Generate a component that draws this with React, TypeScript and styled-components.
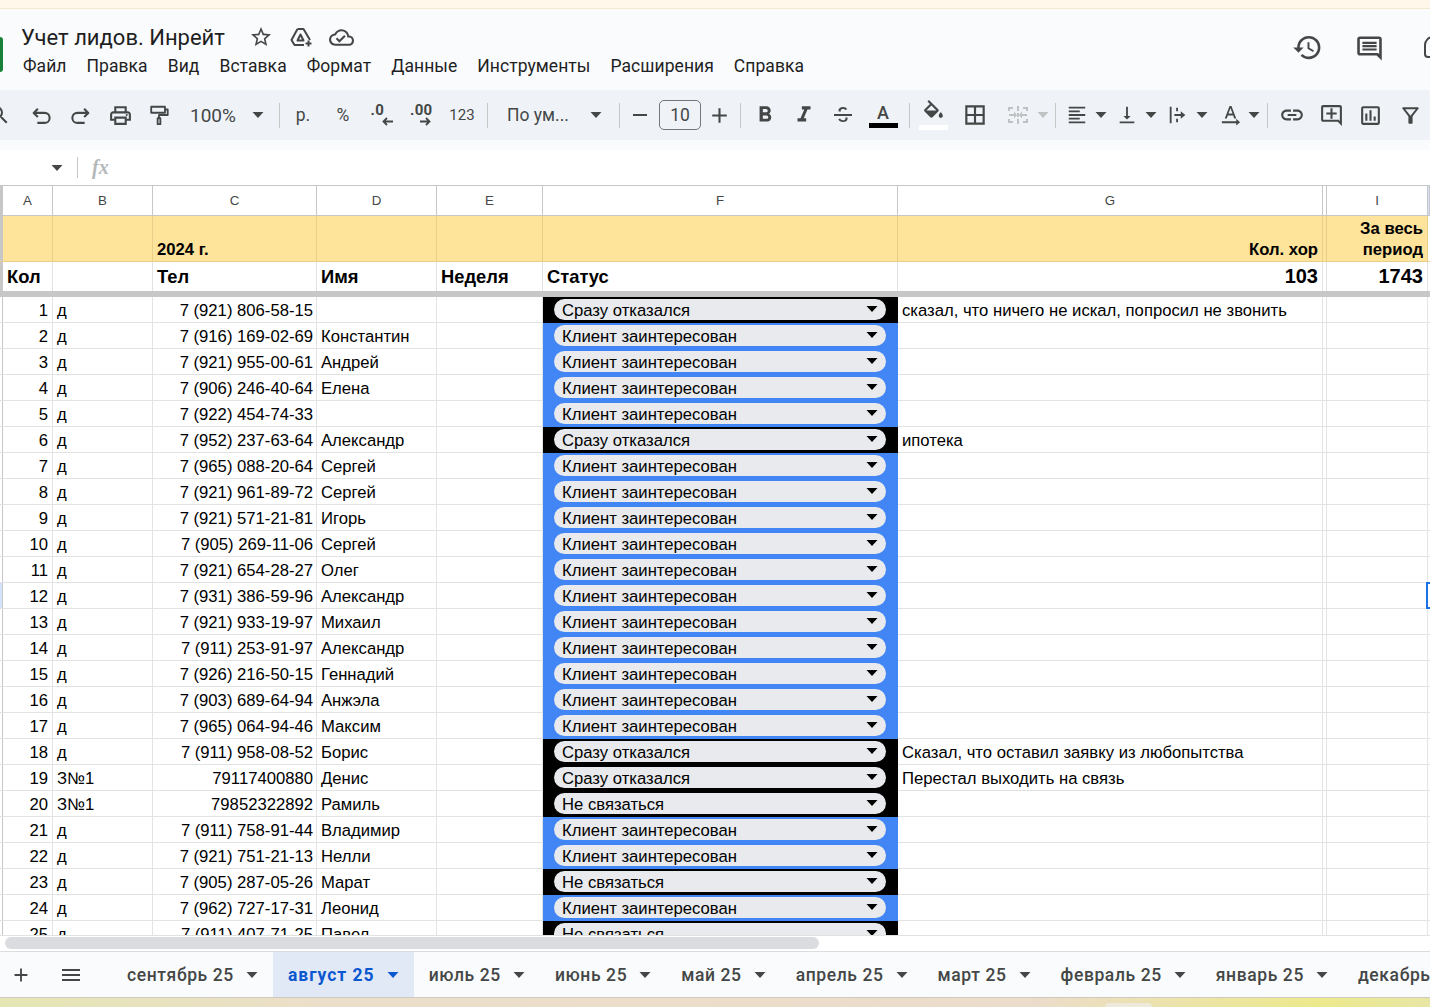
import React from "react";
import styled, { createGlobalStyle } from "styled-components";
import {
  MdHistory,
  MdStarBorder,
  MdOutlineCloudDone,
  MdOutlinePrint,
  MdFormatBold,
  MdFormatItalic,
  MdOutlineBorderAll,
  MdFormatAlignLeft,
  MdVerticalAlignBottom,
  MdLink,
  MdOutlineAddComment,
  MdOutlineInsertChart,
  MdOutlineFilterAlt,
  MdSearch,
  MdAdd,
  MdRemove,
  MdMenu,
} from "react-icons/md";

const COLUMNS = "3px 50px 100px 164px 120px 106px 355px 425px 4px 101px 2px";

const GlobalStyle = createGlobalStyle`
  html, body {
    margin: 0;
    padding: 0;
    width: 1430px;
    height: 1007px;
    overflow: hidden;
    background: #fff;
  }
  * { box-sizing: border-box; }
`;

const Page = styled.div`
  position: relative;
  width: 1430px;
  height: 1007px;
  overflow: hidden;
  display: flex;
  flex-direction: column;
  font-family: Roboto, "Liberation Sans", sans-serif;
`;

const Banner = styled.div`
  height: 9px;
  flex: none;
  background: #fff7e9;
  border-bottom: 1px solid #f3e8cf;
`;

const Header = styled.header`
  height: 81px;
  flex: none;
  background: #f9fbfd;
  display: flex;
  align-items: flex-start;
`;

const Logo = styled.div`
  width: 3px;
  height: 35px;
  margin-top: 28px;
  background: #188038;
  border-radius: 0 3px 3px 0;
  flex: none;
`;

const TitleBlock = styled.div`
  margin-left: 18px;
  width: 1270.5px;
  flex: none;
`;

const TitleRow = styled.div`
  height: 30px;
  margin-top: 13px;
  display: flex;
  align-items: center;
  color: #444746;
`;

const DocTitle = styled.div`
  font-size: 22px;
  color: #1f1f1f;
  width: 226px;
  white-space: nowrap;
`;

const TitleIcon = styled.span<{ $ml?: number }>`
  width: 40px;
  margin-left: ${(p) => p.$ml ?? 0}px;
  display: flex;
  justify-content: center;
  flex: none;
`;

const Menu = styled.nav`
  display: flex;
  margin-top: 2px;
  margin-left: 2px;
  gap: 20px;
  font-size: 17.5px;
  letter-spacing: 0.06px;
  line-height: 24px;
  color: #1f1f1f;
`;

const HeaderActions = styled.div`
  display: flex;
  align-items: center;
  flex: none;
  height: 34px;
  margin-top: 21px;
  gap: 31px;
  color: #444746;
`;

const MeetShape = styled.span`
  display: block;
  flex: none;
  width: 26px;
  height: 22px;
  margin-left: 8px;
  border: 2.5px solid #444746;
  border-radius: 4px;
  border-top-left-radius: 9px;
`;

const ToolbarBand = styled.div`
  height: 60px;
  flex: none;
  background: #f9fbfd;
`;

const Toolbar = styled.div`
  height: 50px;
  background: #eff3f8;
  display: flex;
  align-items: center;
  color: #444746;
  font-size: 17.5px;
  overflow: hidden;
`;

const Slot = styled.span<{ $w: number; $ml?: number }>`
  width: ${(p) => p.$w}px;
  margin-left: ${(p) => p.$ml ?? 0}px;
  flex: none;
  display: flex;
  align-items: center;
  justify-content: center;
  white-space: nowrap;
`;

const Sep = styled.span<{ $l?: number; $r?: number }>`
  width: 1px;
  height: 25px;
  flex: none;
  background: #c7c7c7;
  margin-left: ${(p) => p.$l ?? 0}px;
  margin-right: ${(p) => p.$r ?? 0}px;
`;

const Split = styled.span<{ $w: number; $ml?: number; $gap?: number }>`
  width: ${(p) => p.$w}px;
  margin-left: ${(p) => p.$ml ?? 0}px;
  flex: none;
  display: flex;
  align-items: center;
  gap: ${(p) => p.$gap ?? 7}px;
`;

const Picker = styled.span<{ $w: number; $pad: number; $gap: number; $size?: number }>`
  width: ${(p) => p.$w}px;
  padding-left: ${(p) => p.$pad}px;
  font-size: ${(p) => p.$size ?? 17.5}px;
  flex: none;
  display: flex;
  align-items: center;
  gap: ${(p) => p.$gap}px;
  white-space: nowrap;
`;

const SmallLabel = styled.span`
  font-size: 15px;
`;

const DecimalLabel = styled.span<{ $arrowLeft: number }>`
  width: 24px;
  font-size: 15px;
  font-weight: 700;
  letter-spacing: 0.3px;
  line-height: 13px;
  display: flex;
  flex-direction: column;
  align-items: flex-start;

  svg {
    margin-left: ${(p) => p.$arrowLeft}px;
  }
`;

const SizeBox = styled.span`
  width: 42px;
  height: 30px;
  flex: none;
  border: 1px solid #747775;
  border-radius: 5px;
  display: flex;
  align-items: center;
  justify-content: center;
  font-size: 17.5px;
`;

const ColorTool = styled.span`
  display: flex;
  flex-direction: column;
  align-items: center;
  line-height: 20px;
  font-size: 18px;
  font-family: Roboto, sans-serif;
  font-weight: 500;
`;

const ColorBar = styled.span<{ $color: string }>`
  display: block;
  width: 29px;
  height: 5px;
  background: ${(p) => p.$color};
`;

const DisabledTool = styled.span`
  color: #bfc1c2;
  display: flex;
`;

const FormulaBar = styled.div`
  height: 36px;
  flex: none;
  background: #fff;
  display: flex;
  align-items: center;
  border-bottom: 1px solid #c4c7c5;
  padding-left: 51px;
`;

const FormulaDivider = styled.span`
  width: 1px;
  height: 21px;
  background: #c7c7c7;
  margin-left: 14px;
`;

const FxLabel = styled.span`
  margin-left: 14px;
  font-family: "Liberation Serif", serif;
  font-style: italic;
  font-weight: 700;
  font-size: 20px;
  color: #b5b7b8;
`;

const Sheet = styled.div`
  height: 750px;
  flex: none;
  overflow: hidden;
  background: #fff;
  border-bottom: 1px solid #e1e3e1;
`;

const GridRow = styled.div<{ $h: number; $line?: string }>`
  display: grid;
  grid-template-columns: ${COLUMNS};
  height: ${(p) => p.$h}px;
  border-bottom: 1px solid ${(p) => p.$line ?? "#e2e3e3"};
`;

const Gutter = styled.div<{ $bg?: string }>`
  background: ${(p) => p.$bg ?? "#fff"};
  border-right: 1px solid #c7c7c7;
`;

const HiddenColumn = styled.div<{ $bg?: string; $line?: string }>`
  background: ${(p) => p.$bg ?? "#fff"};
  border-right: 1px solid ${(p) => p.$line ?? "#e2e3e3"};
`;

const RowEnd = styled.div`
  background: #fff;
`;

const ColHead = styled.div<{ $picked?: boolean }>`
  background: ${(p) => (p.$picked ? "#d3e3fd" : "#fff")};
  border-right: 1px solid #c7c7c7;
  display: flex;
  align-items: center;
  justify-content: center;
  font-family: "Liberation Sans", sans-serif;
  font-size: 13.3px;
  color: #444746;
`;

const Cell = styled.div<{
  $align?: "left" | "right";
  $bold?: boolean;
  $size?: number;
  $bg?: string;
  $line?: string;
  $pr?: number;
  $pb?: number;
  $wrap?: boolean;
}>`
  background: ${(p) => p.$bg ?? "#fff"};
  border-right: 1px solid ${(p) => p.$line ?? "#e2e3e3"};
  padding: 0 ${(p) => p.$pr ?? 4}px ${(p) => p.$pb ?? 1}px 4px;
  font-family: "Liberation Sans", sans-serif;
  font-size: ${(p) => p.$size ?? 16.67}px;
  font-weight: ${(p) => (p.$bold ? 700 : 400)};
  color: #000;
  text-align: ${(p) => p.$align ?? "left"};
  white-space: ${(p) => (p.$wrap ? "normal" : "nowrap")};
  overflow: hidden;
  display: flex;
  flex-direction: column;
  justify-content: flex-end;
  line-height: 21px;
`;

const FreezeLine = styled.div`
  height: 5px;
  background: #c7c7c7;
`;

const StatusCell = styled.div<{ $bg: string }>`
  background: ${(p) => p.$bg};
  padding: 2px 12px 0 11px;
  margin-bottom: -1px;
  position: relative;
`;

const StatusPill = styled.div`
  height: 21px;
  border-radius: 11px;
  background: #e8eaed;
  display: flex;
  align-items: center;
  justify-content: space-between;
  padding: 2px 8px 0;
  font-family: "Liberation Sans", sans-serif;
  font-size: 16.67px;
  color: #000;

  svg {
    margin-top: -3px;
  }
`;

const ScrollArea = styled.div`
  height: 16px;
  flex: none;
  background: #fff;
  padding: 1px 0 0 5px;
  border-bottom: 1px solid #dadce0;
`;

const ScrollThumb = styled.div`
  width: 814px;
  height: 12px;
  background: #dadce0;
  border-radius: 6px;
`;

const TabBar = styled.div`
  height: 46px;
  flex: none;
  background: #f9fbfd;
  display: flex;
  align-items: stretch;
  color: #444746;
  overflow: hidden;
  border-bottom: 1px solid #cfcabf;
`;

const TabTool = styled.span<{ $w: number }>`
  width: ${(p) => p.$w}px;
  flex: none;
  display: flex;
  align-items: center;
  justify-content: center;
`;

const Tab = styled.div<{ $active?: boolean }>`
  flex: none;
  display: flex;
  align-items: center;
  gap: 12px;
  padding: 0 15px;
  font-size: 17.5px;
  letter-spacing: ${(p) => (p.$active ? 1 : 0.6)}px;
  white-space: nowrap;
  background: ${(p) => (p.$active ? "#e1e9f7" : "transparent")};
  color: ${(p) => (p.$active ? "#0b57d0" : "#444746")};
  font-weight: ${(p) => (p.$active ? 700 : 500)};
`;

const Desktop = styled.div`
  flex: 1;
  background: linear-gradient(90deg, #e4e6b4 0%, #ecdfc9 22%, #ebdccb 72%, #ece98c 92%, #e8e6a4 100%);
`;

const SelectedCell = styled.div`
  position: absolute;
  left: 1426px;
  top: 582px;
  width: 10px;
  height: 27px;
  border: 2px solid #1a73e8;
`;

const DockTab = styled.div`
  position: absolute;
  left: 1105px;
  top: 1003px;
  width: 47px;
  height: 4px;
  background: #eeeadb;
  border-radius: 5px 5px 0 0;
`;

const Caret = ({ color = "#444746" }: { color?: string }) => (
  <svg width="12" height="6" viewBox="0 0 12 6" style={{ flex: "none" }}>
    <path d="M0.5 0h11L6 6z" fill={color} />
  </svg>
);

const Icon = ({ children, size = 24 }: { children: React.ReactNode; size?: number }) => (
  <svg width={size} height={size} viewBox="0 0 24 24" fill="currentColor" style={{ flex: "none" }}>
    {children}
  </svg>
);

const Line = ({ children, size = 24 }: { children: React.ReactNode; size?: number }) => (
  <svg
    width={size}
    height={size}
    viewBox="0 0 24 24"
    fill="none"
    stroke="currentColor"
    strokeWidth="2"
    strokeLinejoin="round"
    style={{ flex: "none" }}
  >
    {children}
  </svg>
);

const STATUS = {
  ok: { label: "Клиент заинтересован", bg: "#4285f4" },
  no: { label: "Сразу отказался", bg: "#000" },
  nc: { label: "Не связаться", bg: "#000" },
};

type Lead = [string, string, string, keyof typeof STATUS, string?];

const LEADS: Lead[] = [
  ["д", "7 (921) 806-58-15", "", "no", "сказал, что ничего не искал, попросил не звонить"],
  ["д", "7 (916) 169-02-69", "Константин", "ok"],
  ["д", "7 (921) 955-00-61", "Андрей", "ok"],
  ["д", "7 (906) 246-40-64", "Елена", "ok"],
  ["д", "7 (922) 454-74-33", "", "ok"],
  ["д", "7 (952) 237-63-64", "Александр", "no", "ипотека"],
  ["д", "7 (965) 088-20-64", "Сергей", "ok"],
  ["д", "7 (921) 961-89-72", "Сергей", "ok"],
  ["д", "7 (921) 571-21-81", "Игорь", "ok"],
  ["д", "7 (905) 269-11-06", "Сергей", "ok"],
  ["д", "7 (921) 654-28-27", "Олег", "ok"],
  ["д", "7 (931) 386-59-96", "Александр", "ok"],
  ["д", "7 (921) 933-19-97", "Михаил", "ok"],
  ["д", "7 (911) 253-91-97", "Александр", "ok"],
  ["д", "7 (926) 216-50-15", "Геннадий", "ok"],
  ["д", "7 (903) 689-64-94", "Анжэла", "ok"],
  ["д", "7 (965) 064-94-46", "Максим", "ok"],
  ["д", "7 (911) 958-08-52", "Борис", "no", "Сказал, что оставил заявку из любопытства"],
  ["З№1", "79117400880", "Денис", "no", "Перестал выходить на связь"],
  ["З№1", "79852322892", "Рамиль", "nc"],
  ["д", "7 (911) 758-91-44", "Владимир", "ok"],
  ["д", "7 (921) 751-21-13", "Нелли", "ok"],
  ["д", "7 (905) 287-05-26", "Марат", "nc"],
  ["д", "7 (962) 727-17-31", "Леонид", "ok"],
  ["д", "7 (911) 407-71-25", "Павел", "nc"],
];

const TABS = ["сентябрь 25", "август 25", "июль 25", "июнь 25", "май 25", "апрель 25", "март 25", "февраль 25", "январь 25", "декабрь 24"];
const MENU = ["Файл", "Правка", "Вид", "Вставка", "Формат", "Данные", "Инструменты", "Расширения", "Справка"];
const YELLOW = "#fee39a";
const YELLOW_LINE = "#e8d08c";

export default function App() {
  return (
    <Page>
      <GlobalStyle />
      <Banner />
      <Header>
        <Logo />
        <TitleBlock>
          <TitleRow>
            <DocTitle>Учет лидов. Инрейт</DocTitle>
            <TitleIcon $ml={-6}>
              <MdStarBorder size={24} />
            </TitleIcon>
            <TitleIcon>
              <Line>
                <path d="M8.500 4h6l6.500 11" />
                <path d="M8.500 4 2.500 15l3 5h9.500" />
                <path d="M11.500 9.500 8.500 15.500h6z" />
                <path d="M19.500 15.500v6M16.500 18.500h6" />
              </Line>
            </TitleIcon>
            <TitleIcon>
              <MdOutlineCloudDone size={25} />
            </TitleIcon>
          </TitleRow>
          <Menu>
            {MENU.map((m) => (
              <span key={m}>{m}</span>
            ))}
          </Menu>
        </TitleBlock>
        <HeaderActions>
          <MdHistory size={31} />
          <Icon size={31}>
            <path d="M4.500 3.500h15c1.100 0 2 .9 2 2v16.500l-4-3.800H4.500c-1.100 0-2-.9-2-2V5.500c0-1.100.9-2 2-2zm0 2v10.700h14l1 .9V5.500zM6.500 7.500h11v1.700h-11zM6.500 10.100h11v1.700h-11zM6.500 12.700h11v1.700h-11z" />
          </Icon>
          <MeetShape />
        </HeaderActions>
      </Header>

      <ToolbarBand>
        <Toolbar>
          <Slot $w={45} $ml={-24}>
            <MdSearch size={24} />
          </Slot>
          <Slot $w={40}>
            <Line size={25}>
              <path d="M8.500 5.500 4.500 9.500l4 4M4.500 9.500h10.500a4.800 4.800 0 0 1 0 9.600H8" />
            </Line>
          </Slot>
          <Slot $w={39}>
            <Line size={25}>
              <path d="M15.500 5.500l4 4-4 4M19.500 9.500H9a4.800 4.800 0 0 0 0 9.600h7" />
            </Line>
          </Slot>
          <Slot $w={40}><MdOutlinePrint size={25} /></Slot>
          <Slot $w={38}>
            <Line size={22}>
              <path d="M3.500 3h15v6.500h-15zM18.500 6h3v6H12v3.500" />
              <path d="M10.500 15.500h3v6.500h-3z" />
            </Line>
          </Slot>
          <Picker $w={92} $pad={12} $gap={16} $size={19}>
            100% <Caret />
          </Picker>
          <Sep $l={9} $r={3} />
          <Slot $w={40}>р.</Slot>
          <Slot $w={40}>%</Slot>
          <Slot $w={39}>
            <DecimalLabel $arrowLeft={11}>
              .0
              <svg width="11" height="9" viewBox="0 0 11 9">
                <path d="M11 4.500H1.500M5 1 1.500 4.500 5 8" stroke="#444746" strokeWidth="1.800" fill="none" />
              </svg>
            </DecimalLabel>
          </Slot>
          <Slot $w={40}>
            <DecimalLabel $arrowLeft={10}>
              .00
              <svg width="11" height="9" viewBox="0 0 11 9">
                <path d="M0 4.500h9.500M6 1l3.500 3.500L6 8" stroke="#444746" strokeWidth="1.800" fill="none" />
              </svg>
            </DecimalLabel>
          </Slot>
          <Slot $w={40}><SmallLabel>123</SmallLabel></Slot>
          <Sep $l={5} $r={3} />
          <Picker $w={119} $pad={16} $gap={21}>
            По ум... <Caret />
          </Picker>
          <Sep $l={9} />
          <Slot $w={39}><MdRemove size={24} /></Slot>
          <SizeBox>10</SizeBox>
          <Slot $w={36}><MdAdd size={25} /></Slot>
          <Sep $l={3} $r={4} />
          <Slot $w={39}><MdFormatBold size={26} /></Slot>
          <Slot $w={39}><MdFormatItalic size={26} /></Slot>
          <Slot $w={40}>
            <Icon>
              <path d="M3 11h18v2H3zM12 4c2 0 3.500.8 4.200 2.300l-1.800.8C14 6.300 13.200 5.900 12 5.900c-1.300 0-2.300.6-2.300 1.500 0 .4.100.7.400 1H7.800c-.2-.4-.3-.8-.3-1.200C7.500 5.300 9.400 4 12 4zM14.200 14.500h2.300c.1.300.1.600.1.900 0 2.200-1.900 3.600-4.600 3.600-2.200 0-3.900-1-4.700-2.700l1.800-.8c.4 1.100 1.500 1.700 2.900 1.700 1.500 0 2.500-.7 2.500-1.800 0-.3-.1-.6-.3-.9z" />
            </Icon>
          </Slot>
          <Slot $w={40}>
            <ColorTool>
              A
              <ColorBar $color="#000" />
            </ColorTool>
          </Slot>
          <Sep $l={6} $r={4} />
          <Slot $w={39}>
            <ColorTool>
              <Icon size={25}>
                <path d="M16.560 8.940 7.620 0 6.210 1.410l2.380 2.380-5.150 5.150c-.59.59-.59 1.540 0 2.120l5.500 5.500c.29.29.68.44 1.060.44s.77-.15 1.060-.44l5.500-5.500c.59-.58.59-1.530 0-2.120zM5.210 10 10 5.210 14.790 10H5.210zM19 11.500s-2 2.170-2 3.500c0 1.100.9 2 2 2s2-.9 2-2c0-1.330-2-3.500-2-3.500z" />
              </Icon>
              <ColorBar $color="#fff" />
            </ColorTool>
          </Slot>
          <Slot $w={44}><MdOutlineBorderAll size={26} /></Slot>
          <Split $w={42} $ml={9} $gap={7}>
            <DisabledTool>
              <Icon>
                <path d="M2 4h2v4H2zM2 16h2v4H2zM2 4h5v2H2zM2 18h5v2H2zM20 4h2v4h-2zM20 16h2v4h-2zM17 4h5v2h-5zM17 18h5v2h-5zM11 3h2v5h-2zM11 10h2v4h-2zM11 16h2v5h-2zM3 11h5V8.500l3 3.500-3 3.500V13H3zM21 11h-5V8.500L13 12l3 3.500V13h5z" />
              </Icon>
            </DisabledTool>
            <Caret color="#bfc1c2" />
          </Split>
          <Sep $l={7} $r={10} />
          <Split $w={50}>
            <MdFormatAlignLeft size={22} />
            <Caret />
          </Split>
          <Split $w={51}>
            <MdVerticalAlignBottom size={22} />
            <Caret />
          </Split>
          <Split $w={52}>
            <Icon size={22}>
              <path d="M3 3h2v18H3zM8 11h7V8l5 4-5 4v-3H8zM10 4h2v4h-2zM10 16h2v4h-2z" />
            </Icon>
            <Caret />
          </Split>
          <Split $w={39} $gap={6}>
            <Icon size={23}>
              <path d="M11 2h2l5 13h-2.200l-1-3H9.200l-1 3H6zM9.900 10h4.200L12 4.500zM3 18h15v-2.500l4 3.500-4 3.500V20H3z" />
            </Icon>
            <Caret />
          </Split>
          <Sep $l={9} />
          <Slot $w={47}><MdLink size={26} /></Slot>
          <Slot $w={32}><MdOutlineAddComment size={25} /></Slot>
          <Slot $w={47}><MdOutlineInsertChart size={25} /></Slot>
          <Slot $w={32}><MdOutlineFilterAlt size={25} /></Slot>
        </Toolbar>
      </ToolbarBand>

      <FormulaBar>
        <Caret />
        <FormulaDivider />
        <FxLabel>fx</FxLabel>
      </FormulaBar>

      <Sheet>
        <GridRow $h={30} $line="#c7c7c7">
          <Gutter $bg="#c7c7c7" />
          {["A", "B", "C", "D", "E", "F", "G", "", "I", ""].map((c, i) => (
            <ColHead key={i} $picked={i === 9}>{c}</ColHead>
          ))}
        </GridRow>
        <GridRow $h={46} $line={YELLOW_LINE}>
          <Gutter $bg="#c7c7c7" />
          <Cell $bg={YELLOW} $line={YELLOW_LINE} />
          <Cell $bg={YELLOW} $line={YELLOW_LINE} />
          <Cell $bg={YELLOW} $line={YELLOW_LINE} $bold>2024 г.</Cell>
          <Cell $bg={YELLOW} $line={YELLOW_LINE} />
          <Cell $bg={YELLOW} $line={YELLOW_LINE} />
          <Cell $bg={YELLOW} $line={YELLOW_LINE} />
          <Cell $bg={YELLOW} $line={YELLOW_LINE} $bold $align="right">Кол. хор</Cell>
          <HiddenColumn $bg={YELLOW} $line={YELLOW_LINE} />
          <Cell $bg={YELLOW} $line={YELLOW_LINE} $bold $align="right" $wrap>За весь период</Cell>
          <RowEnd />
        </GridRow>
        <GridRow $h={30} $line="#c7c7c7">
          <Gutter $bg="#c7c7c7" />
          <Cell $bold $size={18.33} $pb={4}>Кол</Cell>
          <Cell />
          <Cell $bold $size={18.33} $pb={4}>Тел</Cell>
          <Cell $bold $size={18.33} $pb={4}>Имя</Cell>
          <Cell $bold $size={18.33} $pb={4}>Неделя</Cell>
          <Cell $bold $size={18.33} $pb={4}>Статус</Cell>
          <Cell $bold $size={20} $align="right" $pb={4}>103</Cell>
          <HiddenColumn />
          <Cell $bold $size={20} $align="right" $pb={4}>1743</Cell>
          <RowEnd />
        </GridRow>
        <FreezeLine />
        {LEADS.map(([source, phone, name, status, note], i) => (
          <GridRow $h={26} key={i}>
            <Gutter $bg={i === 11 ? "#d3e3fd" : "#fff"} />
            <Cell $align="right">{i + 1}</Cell>
            <Cell>{source}</Cell>
            <Cell $align="right" $pr={3}>{phone}</Cell>
            <Cell>{name}</Cell>
            <Cell />
            <StatusCell $bg={STATUS[status].bg}>
              <StatusPill>
                {STATUS[status].label}
                <Caret color="#000" />
              </StatusPill>
            </StatusCell>
            <Cell>{note}</Cell>
            <HiddenColumn />
            <Cell />
            <RowEnd />
          </GridRow>
        ))}
      </Sheet>

      <ScrollArea>
        <ScrollThumb />
      </ScrollArea>

      <TabBar>
        <TabTool $w={42}><MdAdd size={22} /></TabTool>
        <TabTool $w={58}><MdMenu size={24} /></TabTool>
        <TabTool $w={12} />
        {TABS.map((t, i) => (
          <Tab key={t} $active={i === 1}>
            {t}
            <Caret color={i === 1 ? "#0b57d0" : "#444746"} />
          </Tab>
        ))}
      </TabBar>
      <Desktop />
      <SelectedCell />
      <DockTab />
    </Page>
  );
}
